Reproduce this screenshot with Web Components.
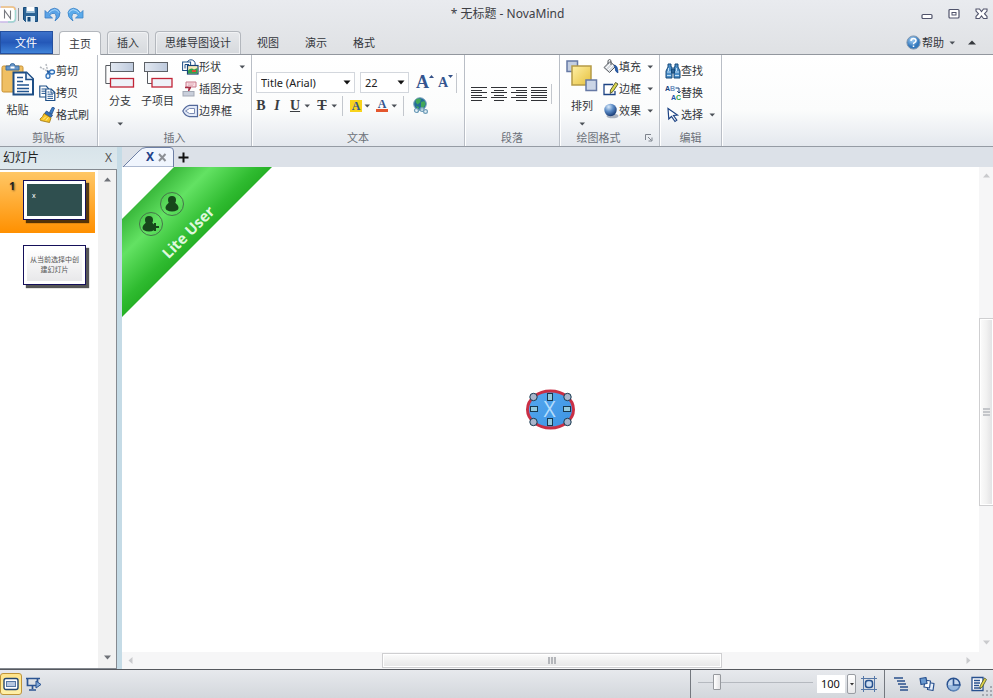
<!DOCTYPE html>
<html lang="zh-CN">
<head>
<meta charset="utf-8">
<title>无标题 - NovaMind</title>
<style>
  html, body { height: 100%; margin: 0; }
  body { font: 11px/16px "Noto Sans", "Noto Sans CJK SC", sans-serif; color: #33363b; overflow: hidden; }
</style>
</head>
<body>
<nm-app></nm-app>

<script>
/* Icon artwork: [width, height, markup] */
const ICONS = {
  logo: [17, 17, `<rect x="-2" y="1" width="17.500" height="15" rx="3" fill="#fff" stroke="#c9b8e8" stroke-width="1.400"/><path d="M1 1h11q3 0 3 3" fill="none" stroke="#f3c77d" stroke-width="1.400"/><path d="M15.500 4v8q0 4-4 4H8" fill="none" stroke="#9fd9cf" stroke-width="1.400"/><path d="M4.500 12.500v-8l6 8v-8" fill="none" stroke="#77797f" stroke-width="1.100"/>`],
  save: [15, 15, `<path d="M.5.5h14v14h-12l-2-2z" fill="#2c6496" stroke="#174a7a"/><rect x="3.500" y="0" width="8" height="6" fill="#fff"/><rect x="4" y="4" width="7" height="2" fill="#9fc3dd"/><rect x="3" y="9" width="9" height="6" fill="#dbe9f3"/><rect x="4.500" y="10" width="3" height="4.500" fill="#174a7a"/>`],
  undo: [17, 15, `<path d="M1 3.500v7.500h7.500L5.800 8.600Q7.500 5.500 10.500 6.500q3 2 .5 7.500 5.500-3.500 5-8.500Q15 1.500 10.500 1.200 6 1.500 3.500 6z" fill="#5aa2e6" stroke="#3a7cc4" stroke-width=".8"/><path d="M5 6Q8 2.500 11 2.700q3 .3 3.800 3" stroke="#a9d6fb" fill="none"/>`],
  redo: [17, 15, `<path d="M16 3.500v7.500H8.500l2.700-2.400Q9.500 5.500 6.500 6.500q-3 2-.5 7.500Q.5 10.500 1 5.500 2 1.500 6.500 1.200 11 1.500 13.500 6z" fill="#5aaaea" stroke="#3a84c8" stroke-width=".8"/><path d="M12 6Q9 2.500 6 2.700 3 3 2.200 5.700" stroke="#b3dcfc" fill="none"/>`],
  min: [12, 12, `<rect x="1" y="6.500" width="10" height="4" rx="1" fill="#fff" stroke="#50536b" stroke-width="1.200"/>`],
  max: [12, 12, `<rect x="1" y="1.500" width="10" height="8.500" rx="1" fill="#fff" stroke="#50536b" stroke-width="1.200"/><rect x="4" y="4.500" width="4" height="2.500" fill="#fff" stroke="#50536b"/>`],
  close: [13, 12, `<path d="M1 1h3.500l2 2.500 2-2.500H12v2L9.500 5.700 12 8.500v2H8.500l-2-2.500-2 2.500H1v-2l2.500-2.800L1 3z" fill="#fff" stroke="#50536b" stroke-width="1.100"/>`],
  help: [15, 15, `<defs><radialGradient id="g" cx=".4" cy=".3"><stop offset="0" stop-color="#a9d4f8"/><stop offset="1" stop-color="#3479bd"/></radialGradient></defs><circle cx="7.500" cy="7.500" r="6.600" fill="url(#g)" stroke="#8297af"/><path d="M5 6q0-2.500 2.500-2.500T10 5.800Q10 7 8.500 7.600 7.500 8 7.500 9.200M7.500 10.500v1.500" fill="none" stroke="#fff" stroke-width="1.500"/>`],
  caret: [7, 4, `<path d="M.5.5h5.500L3.250 3.500z" fill="#4b5057"/>`],
  caretup: [8, 5, `<path d="M0 4.500h8L4 .5z" fill="#35383d"/>`],
  drop: [8, 5, `<path d="M.5.5h7L4 4.500z" fill="#111"/>`],
  paste: [33, 33, `<rect x="1" y="3" width="21" height="26" rx="1.500" fill="#efbf63" stroke="#c68f33"/><path d="M5 3h4q0-2.500 2.500-2.500T14 3h4v4H5z" fill="#6695c8" stroke="#3d6ea3"/><rect x="9.500" y="3.500" width="4" height="2" fill="#fff"/><path d="M12.500 9.500h13l6.500 6.500v15.500H12.500z" fill="#fff" stroke="#1d4e86" stroke-width="2"/><path d="M25 9.500v7h7" fill="#e7f0fa" stroke="#1d4e86" stroke-width="1.600"/><path d="M16 14.500h6M16 18.500h6M16 22h12M16 25.500h12M16 28.500h12" stroke="#245690" stroke-width="1.700"/>`],
  cut: [17, 16, `<path d="M1 4l9 5M7 1l2 8" stroke="#b5b9bf" stroke-width="1.500" stroke-dasharray="2 1"/><path d="M8 8l4 1.500M9 9v2.500" stroke="#245a9d" stroke-width="1.600"/><ellipse cx="13" cy="9" rx="2.500" ry="2" fill="#e6f2ff" stroke="#2d6fb8" stroke-width="1.300"/><ellipse cx="9" cy="13" rx="2" ry="2.300" fill="#e6f2ff" stroke="#2d6fb8" stroke-width="1.300"/>`],
  copy: [17, 16, `<path d="M.8 1h6.500l2.500 3v8h-9z" fill="#fff" stroke="#1d4e86" stroke-width="1.200"/><path d="M2.500 4h4M2.500 6.200h5M2.500 8.400h5" stroke="#245690"/><path d="M6.800 4h5.500l3.500 3.500v8h-9z" fill="#fff" stroke="#1d4e86" stroke-width="1.200"/><path d="M12 4v4h4" fill="none" stroke="#1d4e86"/><path d="M8.500 7h2M8.500 9.200h5.500M8.500 11.300h5.500M8.500 13.400h5.500" stroke="#245690"/>`],
  brush: [17, 16, `<path d="M13.500 0l2 1-2.500 6-2.500-1.500z" fill="#3d7cc4" stroke="#1e4d8d" stroke-width=".8"/><path d="M7.500 4l6 4-1.500 2.500-6.500-4z" fill="#3570b8" stroke="#1d4680" stroke-width=".8"/><path d="M5 6.500l7 4.500-1.500 4.500-9-2-.5-1.500q3-2 4-5.500z" fill="#f7c325" stroke="#9b7410" stroke-width=".8"/><path d="M4 12.500l3-3M7 13.500l2.500-3" stroke="#fff09a"/>`],
  branch: [30, 29, `<defs><linearGradient id="g" x2="1"><stop stop-color="#e2e8f1"/><stop offset="1" stop-color="#bdc9dc"/></linearGradient></defs><path d="M6 4.500H.8v18H6" fill="none" stroke="#55595f"/><rect x="5.500" y="1.500" width="23" height="9" fill="url(#g)" stroke="#5d6167"/><rect x="5.500" y="17.500" width="23" height="8.500" fill="#eef1f8" stroke="#c22436" stroke-width="1.300"/>`],
  child: [30, 29, `<defs><linearGradient id="g" x2="1"><stop stop-color="#e2e8f1"/><stop offset="1" stop-color="#bdc9dc"/></linearGradient></defs><path d="M4.500 11v11.500H9" fill="none" stroke="#55595f"/><rect x="1.500" y="1.500" width="23" height="9" fill="url(#g)" stroke="#5d6167"/><rect x="9" y="17.500" width="20" height="8.500" fill="#eef1f8" stroke="#c22436" stroke-width="1.300"/>`],
  shape: [17, 16, `<circle cx="9" cy="5" r="4.200" fill="#fff" stroke="#1d4e86"/><rect x=".6" y="3" width="8" height="8.500" fill="#fff" stroke="#1d4e86"/><path d="M3 9.500V5.500h4" fill="none" stroke="#1d4e86"/><rect x="5.500" y="6.500" width="10.500" height="8.500" fill="#f8e9bb" stroke="#184376" stroke-width="1.200"/><path d="M6 14.500v-3q3-3.500 6-1l3.500-1.500v5.500z" fill="#35a04b"/><path d="M10 12h4" stroke="#df4b38" stroke-width="2"/>`],
  callout: [17, 16, `<path d="M4 1h10v5H8.500l-2 3.500V6H4z" fill="#f8dfe5" stroke="#c8788a"/><path d="M6 3h6M6 4.700h5" stroke="#d99aa6" stroke-width=".7"/><path d="M3 6.500h6M8.500 6.500l-2 3.500" stroke="#a52d43" stroke-width="1.500"/><rect x="1" y="10.500" width="11" height="4.500" fill="#c9cfdb" stroke="#a3a9b5"/>`],
  boundary: [17, 16, `<path d="M.8 8q2.500-5 6.700-5.700h8v11.400h-8Q3.300 13 .8 8z" fill="#e3eaf8" stroke="#53689a" stroke-width="1.200"/><path d="M3.500 8l4-2.500h5v5H7.500z" fill="#fff" stroke="#7d8db5"/>`],
  globe: [17, 17, `<circle cx="8" cy="7" r="6.300" fill="#236c98" stroke="#7ca5bd"/><path d="M4 2.500q3-2 5 0l-1 3-2.500 2L3.500 5zM9 5l3.500-1 1 3-2.500 5-2-1.500zM4 9l3 1-1 2.500z" fill="#41a85a"/><g fill="#dcebf5" fill-opacity=".65" stroke="#6f9db9" stroke-width="1.200"><circle cx="4.500" cy="13.500" r="2"/><circle cx="10" cy="12.500" r="2"/><circle cx="13.500" cy="14.500" r="1.900"/></g>`],
  left: [17, 14, `<path d="M0 .5h16M0 3.500h11M0 5.500h16M0 8.500h11M0 10.500h16M0 13.500h11" stroke="#303236"/>`],
  center: [17, 14, `<path d="M0 .5h16M3 3.500h10M0 5.500h16M3 8.500h10M0 10.500h16M3 13.500h10" stroke="#303236"/>`],
  right: [17, 14, `<path d="M0 .5h16M5 3.500h11M0 5.500h16M5 8.500h11M0 10.500h16M5 13.500h11" stroke="#303236"/>`],
  justify: [17, 14, `<path d="M0 .5h16M0 3.500h16M0 5.500h16M0 8.500h16M0 10.500h16M0 13.500h16" stroke="#303236"/>`],
  arrange: [32, 32, `<defs><linearGradient id="g" x2="1" y2="1"><stop stop-color="#fff0a6"/><stop offset="1" stop-color="#e6c03c"/></linearGradient></defs><rect x="1" y="1" width="10.500" height="10.500" fill="#c3cee1" stroke="#6679a5" stroke-width="1.500"/><rect x="6" y="6" width="19" height="19" fill="url(#g)" stroke="#b59b47" stroke-width="1.500"/><rect x="20" y="20" width="10.500" height="10.500" fill="#cbd5e6" stroke="#6679a5" stroke-width="1.500"/>`],
  fill: [16, 16, `<path d="M1 8.500l6-6 5.500 5-6 6z" fill="#d9dde2" stroke="#55595f"/><path d="M3 9l4.500-4.500M5 11l5-5" stroke="#fff"/><path d="M5 5V1.500q2-2 3 0V6" fill="none" stroke="#55595f"/><path d="M11 6q4 0 4 8-3-1-3-5.500z" fill="#245db2" stroke="#173f7f" stroke-width=".6"/>`],
  border: [16, 16, `<path d="M10 3.500H1v10h11V10" fill="#fff" stroke="#1d4384" stroke-width="1.300"/><path d="M12.500 1.500l2.500 1.500-5 7.500-2.800 2 .3-3.500z" fill="#dcd84e" stroke="#4d502f" stroke-width=".9"/>`],
  effect: [16, 16, `<defs><radialGradient id="g" cx=".35" cy=".25" r=".75"><stop stop-color="#d9eafa"/><stop offset=".5" stop-color="#5a8ac5"/><stop offset="1" stop-color="#1c3f79"/></radialGradient></defs><ellipse cx="9.500" cy="13" rx="6" ry="2.300" fill="#a9b1be"/><circle cx="7.500" cy="7" r="6.200" fill="url(#g)"/>`],
  find: [16, 16, `<g fill="#4d8fc8" stroke="#174a7a"><path d="M3 1h3v3h1v11H1V8l2-4zM10 1h3v3l2 4v7H9V4h1z"/><path d="M6.500 6h3v4h-3z" fill="#2c6496"/></g><path d="M2 9h4M10 9h4M2 12.500h4M10 12.500h4M3.500 5v3M11.500 5v3" stroke="#c2e0f6"/>`],
  replace: [16, 16, `<g font-family="Liberation Sans, sans-serif" font-weight="bold" font-size="7"><text x="0" y="6" fill="#17407c">A</text><text x="5" y="6" fill="#6f92bd">B</text><text x="6" y="15" fill="#1b51ab">A</text><text x="11" y="15" fill="#27a048">C</text></g><path d="M10.500 3H14v5M12.300 6.200L14 8l1.700-1.800" fill="none" stroke="#17407c"/>`],
  select: [16, 16, `<path d="M3 1.500l.8 10.500 2.700-2.500 3.500 5 1.800-1.300-3.300-4.700 4-.5z" fill="#fff" stroke="#1d4384" stroke-width="1.200"/>`],
  launcher: [8, 8, `<path d="M.5 6V.5H6" fill="none" stroke="#7d838d"/><path d="M3 3l3.500 3.500M7 3.500V7H3.500" fill="none" stroke="#7d838d"/>`],
  tri: [7, 5, `<path d="M0 4.500h7L3.500.5z" fill="currentColor"/>`],
  normal: [16, 16, `<rect x="1" y="2.500" width="14" height="11" rx="2" fill="#fff" stroke="#23466f" stroke-width="1.400"/><rect x="3.500" y="5.500" width="9" height="5" fill="#b6c7df" stroke="#5577a3"/>`],
  present: [17, 16, `<path d="M1 2.500h14M2.500 3v6.500h10V3M7.500 10v3M4 14h7" fill="none" stroke="#2b5492" stroke-width="1.700"/><path d="M11 5l5 3.500-5 3.500z" fill="#83a9d8" stroke="#2b5492"/>`],
  fit: [16, 16, `<path d="M2.500 0v16M13.500 0v16M0 2.500h16M0 13.500h16" stroke="#5678a8"/><rect x="4.500" y="4.500" width="7" height="7" rx="2.500" fill="#cfdff2" stroke="#27528e" stroke-width="1.500"/>`],
  outline: [15, 16, `<path d="M0 2h9M3 5h8M4 8h8M6 11h8M6 14h8" stroke="#2a508c" stroke-width="1.700"/>`],
  stack: [17, 16, `<g stroke="#28518f" stroke-width="1.200" stroke-linejoin="round"><path d="M9.500 6.500l5.500 1-1 7-5.500-1z" fill="#e8f0fb"/><path d="M6 4l5.500 1-1 7-5.500-1z" fill="#fff"/><path d="M1 2.500l6-1 1 6-6 1z" fill="#6b9ad0"/></g>`],
  pie: [15, 15, `<circle cx="7.500" cy="7.500" r="6.300" fill="#c6d8ee" stroke="#28518f" stroke-width="1.500"/><path d="M1.500 8h13q-.5 6-7 6.500-5.500-1-6-6.500z" fill="#7da6d5" opacity=".6"/><path d="M7.500 1v7h7" fill="none" stroke="#28518f" stroke-width="1.600"/>`],
  notes: [16, 16, `<path d="M1 1.500h11v13H1z" fill="#fff" stroke="#28518f" stroke-width="1.300"/><path d="M3 4.500h6M3 7h6M3 9.500h5M3 12h7" stroke="#28518f" stroke-width="1.300"/><path d="M13.500 2l2 1.500-4.500 8-2 1 0-2.500z" fill="#e1d44b" stroke="#46522f" stroke-width=".8"/>`],
  grip: [11, 11, `<path d="M8 0h2v2H8zM4 4h2v2H4zM8 4h2v2H8zM0 8h2v2H0zM4 8h2v2H4zM8 8h2v2H8z" fill="#a4a9b1"/>`]
};

const RESET = `
  * { box-sizing: border-box; }
  button { font: inherit; color: inherit; background: none; border: 0; padding: 0; margin: 0; }
  button nm-icon { pointer-events: none; }`;

function define(name, css, html, setup) {
  const template = document.createElement('template');
  template.innerHTML = `<style>${RESET}${css}</style>${html}`;
  customElements.define(name, class extends HTMLElement {
    constructor() {
      super();
      this.attachShadow({ mode: 'open' }).append(template.content.cloneNode(true));
    }
    connectedCallback() { if (setup) setup(this, this.shadowRoot); }
  });
}

/* Puts the artwork named by the host's icon attribute first in its button. */
function addIcon(el, root) {
  if (root.querySelector('.art')) return;
  const icon = document.createElement('nm-icon');
  icon.className = 'art';
  icon.setAttribute('name', el.getAttribute('icon'));
  root.querySelector('button').prepend(icon);
}

define('nm-icon', `:host { display: block; flex: none; } span, svg { display: block; }`, `<span></span>`, (el, root) => {
  const [w, h, art] = ICONS[el.getAttribute('name')];
  root.querySelector('span').innerHTML = `<svg width="${w}" height="${h}" viewBox="0 0 ${w} ${h}" aria-hidden="true">${art}</svg>`;
});

define('nm-title-bar', `
  :host { display: flex; align-items: center; height: 28px; padding-right: 5px; }
  .quick { display: flex; align-items: center; gap: 6px; }
  .quick i { width: 1px; height: 13px; background: #8e9299; margin: 0 -2px 0 -5px; }
  h1 { flex: 1; margin: 0; padding-left: 10px; text-align: center; font-size: 12px; font-weight: 400; line-height: 28px; color: #3d4045; }
  .window { display: flex; gap: 15px; }`,
  `<div class="quick"><nm-icon name="logo"></nm-icon><i></i>
     <button aria-label="保存"><nm-icon name="save"></nm-icon></button>
     <button aria-label="撤销"><nm-icon name="undo"></nm-icon></button>
     <button aria-label="重做"><nm-icon name="redo"></nm-icon></button></div>
   <h1>* 无标题 - NovaMind</h1>
   <div class="window">
     <button aria-label="最小化"><nm-icon name="min"></nm-icon></button>
     <button aria-label="最大化"><nm-icon name="max"></nm-icon></button>
     <button aria-label="关闭"><nm-icon name="close"></nm-icon></button></div>`);

define('nm-tab', `
  :host { display: block; }
  button { display: block; height: 100%; padding: 0 10px; border: 1px solid transparent; border-width: 1px 0 0; line-height: 22px; }
  :host([kind=file]) button { padding: 0 16px 0 15px; color: #fff; background: linear-gradient(#3f74cc, #2458b8 50%, #4388dc); box-shadow: inset 0 0 0 1px #2450a0; border: 0; }
  :host([kind=boxed]) button { border: 1px solid #b3b7bd; border-bottom: 0; border-radius: 4px 4px 0 0; padding: 0 9px; background: linear-gradient(#e6e8eb, #d6d9dd); box-shadow: inset 0 0 0 1px #f1f2f4; }
  :host([kind=active]) { position: relative; margin-bottom: -1px; }
  :host([kind=active]) button { border: 1px solid #b3b7bd; border-bottom: 0; border-radius: 4px 4px 0 0; padding: 0 9px; background: #fff; }`,
  `<button role="tab"><slot></slot></button>`);

define('nm-tab-bar', `
  :host { display: flex; height: 27px; padding-top: 3px; border-bottom: 1px solid #92979e; }
  nav { display: flex; gap: 6px; flex: 1; }
  .help { display: flex; align-items: center; gap: 12px; padding-right: 17px; }
  .help button { display: flex; align-items: center; gap: 1px; }
  .help nm-icon[name=caret] { margin-left: 4px; }`,
  `<nav role="tablist"><nm-tab kind="file">文件</nm-tab><nm-tab kind="active">主页</nm-tab><nm-tab kind="boxed">插入</nm-tab><nm-tab kind="boxed">思维导图设计</nm-tab><nm-tab>视图</nm-tab><nm-tab>演示</nm-tab><nm-tab>格式</nm-tab></nav>
   <div class="help"><button><nm-icon name="help"></nm-icon>帮助<nm-icon name="caret"></nm-icon></button><button aria-label="折叠功能区"><nm-icon name="caretup"></nm-icon></button></div>`);

define('nm-group', `
  :host { display: flex; flex-direction: column; border-right: 1px solid #b9bec6; box-shadow: 1px 0 #fff; }
  .body { flex: 1; display: flex; min-height: 0; }
  footer { display: flex; align-items: center; height: 16px; color: #6b7078; text-align: center; }
  footer span { flex: 1; }
  footer button { padding-right: 6px; padding-left: 8px; display: none; }
  :host([launcher]) footer button { display: block; }`,
  `<div class="body"><slot></slot></div><footer><span></span><button aria-label="更多选项"><nm-icon name="launcher"></nm-icon></button></footer>`,
  (el, root) => { root.querySelector('span').textContent = el.getAttribute('label'); });

define('nm-big-button', `
  :host { display: block; }
  button { height: 100%; display: flex; flex-direction: column; align-items: center; justify-content: flex-start; padding-bottom: 4px; }
  span { line-height: 18px; margin-top: var(--label-gap, 2px); }
  nm-icon[name=caret] { margin-top: auto; display: none; }
  :host([menu]) nm-icon[name=caret] { display: block; }`,
  `<button><span><slot></slot></span><nm-icon name="caret"></nm-icon></button>`, addIcon);

define('nm-small-button', `
  :host { display: block; }
  button { width: 100%; height: 22px; display: flex; align-items: center; }
  i { flex: 1; }
  nm-icon[name=caret] { margin-left: 6px; display: none; }
  :host([menu]) nm-icon[name=caret] { display: block; }`,
  `<button><slot></slot><i></i><nm-icon name="caret"></nm-icon></button>`, addIcon);

define('nm-combo', `
  :host { display: grid; height: 21px; border: 1px solid #d3d7dd; background: #fff; }
  select, nm-icon { grid-area: 1 / 1; }
  select { appearance: none; font: inherit; color: #222; border: 0; background: none; padding: 0 16px 0 4px; min-width: 0; width: 100%; }
  nm-icon { place-self: center end; margin-right: 3px; pointer-events: none; }`,
  `<select><option></option></select><nm-icon name="drop"></nm-icon>`,
  (el, root) => {
    root.querySelector('option').textContent = el.getAttribute('value');
    root.querySelector('select').setAttribute('aria-label', el.getAttribute('label'));
  });

define('nm-ribbon', `
  :host { display: flex; height: 92px; background: linear-gradient(#fff, #fbfcfc 60%, #e4e8ee); border-bottom: 1px solid #959ba4; }
  .col { display: flex; flex-direction: column; }
  .low { padding: 5px 8px 0 0; }
  .high { padding: 1px 5px 0 0; }
  .wide { min-width: 69px; }
  .clip { display: flex; padding: 8px 5px 0 1px; --label-gap: 5px; }
  .insert { display: flex; gap: 6px; padding: 6px 8px 0 7px; }
  .text { padding: 17px 7px 0 4px; gap: 2px; }
  .row { display: flex; align-items: center; height: 21px; }
  .row button { display: flex; align-items: center; justify-content: center; }
  .row .glyph { font: bold 14px/18px "Liberation Serif", serif; color: #3a3d42; height: 21px; }
  .row .italic { font-style: italic; }
  .row .under { text-decoration: underline; }
  .row .strike { text-decoration: line-through; }
  .row .font-size { font: bold 18px/21px "Liberation Serif", serif; color: #34558f; height: 21px; }
  .row .font-size.small { font-size: 14px; }
  .font-size svg { align-self: flex-start; margin-top: 2px; }
  .row .mark { width: 12px; height: 12px; background: #f8d31c; font: bold 12px/12px "Liberation Serif", serif; color: #34558f; }
  .row .mark.red { background: none; height: 13px; border-bottom: 3px solid #e4572e; line-height: 10px; }
  .sep { width: 1px; height: 20px; background: #c3c7cd; }
  .align { display: flex; gap: 3px; align-items: center; padding: 2px 7px 0 6px; }
  .arrange { display: flex; padding: 5px 5px 0 6px; --label-gap: 5px; }
  .edit { padding: 5px 5px 0 5px; }`,
  `<nm-group label="剪贴板">
     <div class="clip"><nm-big-button icon="paste">粘贴</nm-big-button></div>
     <div class="col low"><nm-small-button icon="cut">剪切</nm-small-button><nm-small-button icon="copy">拷贝</nm-small-button><nm-small-button icon="brush">格式刷</nm-small-button></div>
   </nm-group>
   <nm-group label="插入">
     <div class="insert"><nm-big-button icon="branch" menu>分支</nm-big-button><nm-big-button icon="child">子项目</nm-big-button></div>
     <div class="col high wide"><nm-small-button icon="shape" menu>形状</nm-small-button><nm-small-button icon="callout">插图分支</nm-small-button><nm-small-button icon="boundary">边界框</nm-small-button></div>
   </nm-group>
   <nm-group label="文本"><div class="col text">
     <div class="row">
       <nm-combo label="字体" value="Title (Arial)" style="width:99px;margin-right:5px"></nm-combo>
       <nm-combo label="字号" value="22" style="width:49px;margin-right:7px"></nm-combo>
       <button class="font-size" aria-label="增大字号">A<svg width="5" height="6"><path d="M0 4h5L2.500 1z" fill="#345187"/></svg></button>
       <button class="font-size small" aria-label="减小字号" style="margin-left:4px">A<svg width="5" height="6"><path d="M0 1h5L2.500 4z" fill="#345187"/></svg></button>
       <i class="sep" style="margin-left:auto"></i>
     </div>
     <div class="row">
       <button class="glyph" style="width:10px">B</button>
       <button class="glyph italic" style="width:10px;margin-left:6px">I</button>
       <button class="glyph under" style="width:12px;margin-left:7px">U</button><nm-icon name="caret" style="margin-left:3px"></nm-icon>
       <button class="glyph strike" style="width:10px;margin-left:6px">T</button><nm-icon name="caret" style="margin-left:4px"></nm-icon>
       <i class="sep" style="margin-left:4px"></i>
       <button class="mark" style="margin-left:7px">A</button><nm-icon name="caret" style="margin-left:2px"></nm-icon>
       <button class="mark red" style="margin-left:5px">A</button><nm-icon name="caret" style="margin-left:3px"></nm-icon>
       <i class="sep" style="margin-left:5px"></i>
       <button aria-label="超链接" style="margin-left:8px;margin-right:28px"><nm-icon name="globe"></nm-icon></button>
     </div></div>
   </nm-group>
   <nm-group label="段落"><div class="align">
     <button aria-label="左对齐"><nm-icon name="left"></nm-icon></button><button aria-label="居中"><nm-icon name="center"></nm-icon></button><button aria-label="右对齐"><nm-icon name="right"></nm-icon></button><button aria-label="两端对齐"><nm-icon name="justify"></nm-icon></button><i class="sep"></i></div>
   </nm-group>
   <nm-group label="绘图格式" launcher>
     <div class="arrange"><nm-big-button icon="arrange" menu>排列</nm-big-button></div>
     <div class="col high"><nm-small-button icon="fill" menu>填充</nm-small-button><nm-small-button icon="border" menu>边框</nm-small-button><nm-small-button icon="effect" menu>效果</nm-small-button></div>
   </nm-group>
   <nm-group label="编辑">
     <div class="col edit"><nm-small-button icon="find">查找</nm-small-button><nm-small-button icon="replace">替换</nm-small-button><nm-small-button icon="select" menu>选择</nm-small-button></div>
   </nm-group>`);

define('nm-slides', `
  :host { display: flex; flex-direction: column; width: 117px; flex: none; background: #fff; }
  header { display: flex; align-items: center; justify-content: space-between; height: 22px; padding: 0 5px 0 3px; background: linear-gradient(#d8e4ea, #dfe9ee); font-size: 12px; color: #222; }
  header button { color: #555; }
  .area { flex: 1; display: flex; min-height: 0; border: 1px solid #858a91; border-width: 1px 1px 1px 0; }
  .list { flex: 1; padding-top: 2px; }
  .slide { display: flex; align-items: flex-start; width: 95px; height: 61px; padding: 8px 0 0 9px; }
  .slide + .slide { margin-top: 4px; }
  .slide.on { background: linear-gradient(#ffc766, #ff9000); }
  b { width: 14px; font-size: 11px; line-height: 11px; color: #222; text-shadow: 1px 1px 2px #0008; }
  .thumb { width: 63px; height: 40px; padding: 3px; border: 1px solid #15105a; background: #fff; box-shadow: 3px 3px 1px #000a; }
  .thumb div { height: 100%; display: grid; place-items: center; text-align: center; font-size: 7px; line-height: 10px; color: #555; background: linear-gradient(#fff, #e8e8ea); }
  .on .thumb div { background: #2f4f4f; color: #fff; place-items: start; padding: 7px 0 0 5px; }
  .scroll { width: 18px; background: #f2f2f2; display: flex; flex-direction: column; justify-content: space-between; align-items: center; padding: 7px 0 8px; color: #6f7278; }
  .down { transform: rotate(180deg); }`,
  `<header><span>幻灯片</span><button aria-label="关闭面板">X</button></header>
   <div class="area"><div class="list">
     <div class="slide on"><b>1</b><div class="thumb"><div>x</div></div></div>
     <div class="slide"><b></b><div class="thumb"><div>从当前选择中创<br>建幻灯片</div></div></div>
   </div><div class="scroll"><nm-icon name="tri"></nm-icon><nm-icon name="tri" class="down"></nm-icon></div></div>`);

define('nm-scrollbar', `
  :host { display: flex; align-items: center; background: #f6f6f7; color: #c9cacd; height: 17px; padding: 0 7px 0 5px; gap: 8px; }
  .track { flex: 1; display: flex; align-self: stretch; }
  .before { flex: var(--before); } .after { flex: var(--after); }
  .thumb { flex: var(--size); display: grid; place-items: center; border: 1px solid #cfcfd1; margin: 1px 0; background: linear-gradient(#fcfcfc, #f1f1f1 50%, #e6e6e7); box-shadow: inset 0 0 0 1px #fff; }
  .thumb i { width: 8px; height: 7px; background: repeating-linear-gradient(90deg, #b4b6ba 0 2px, #eee 2px 3px); }
  .start { transform: rotate(-90deg); } .end { transform: rotate(90deg); }
  :host([vertical]) { flex-direction: column; height: auto; width: 14px; padding: 6px 0 7px; }
  :host([vertical]) .track { flex-direction: column; }
  :host([vertical]) .thumb { margin: 0 -1px 0 0; background: linear-gradient(90deg, #fcfcfc, #f1f1f1 50%, #e0e0e2); }
  :host([vertical]) .thumb i { width: 7px; height: 8px; background: repeating-linear-gradient(#c4c6ca 0 2px, #eee 2px 3px); }
  :host([vertical]) .start { transform: none; } :host([vertical]) .end { transform: rotate(180deg); }`,
  `<nm-icon class="start" name="tri"></nm-icon><div class="track"><div class="before"></div><div class="thumb"><i></i></div><div class="after"></div></div><nm-icon class="end" name="tri"></nm-icon>`);

define('nm-license-ribbon', `
  :host { position: absolute; top: 0; left: 0; } svg { display: block; }`,
  `<svg width="152" height="152" viewBox="0 0 152 152">
     <defs><linearGradient id="green" gradientUnits="userSpaceOnUse" x1="26" y1="26" x2="75" y2="75"><stop stop-color="#39b83b"/><stop offset=".38" stop-color="#63e263"/><stop offset=".85" stop-color="#2fbb30"/><stop offset="1" stop-color="#26b126"/></linearGradient></defs>
     <path d="M0 52L52 0h98L0 150z" fill="url(#green)"/>
     <g fill="none" stroke="#47744b"><circle cx="50" cy="37" r="11.500"/><circle cx="29" cy="57" r="11.500"/></g>
     <g fill="#17471b"><circle cx="50" cy="33" r="4"/><path d="M47.500 35h5l3 3q2 3 0 5-5.500 3-11 0-2-2 0-5z"/><circle cx="27" cy="53" r="4"/><path d="M24.500 55h5l3 3q2 3 0 5-5.500 3-11 0-2-2 0-5z"/><path d="M32 56h2v3h3v2h-3v3h-2v-3h-3v-2h3z"/></g>
     <text transform="translate(70 69) rotate(-45)" text-anchor="middle" font-family="Open Sans, sans-serif" font-weight="700" font-size="15" fill="#dff8dc">Lite User</text>
   </svg>`);

define('nm-topic', `:host { display: block; } svg { display: block; }`,
  `<svg width="52" height="44" viewBox="0 0 52 44">
     <defs><linearGradient id="blue" x2="1" y2="1"><stop stop-color="#55a8f0"/><stop offset="1" stop-color="#3c93e2"/></linearGradient></defs>
     <ellipse cx="25.500" cy="21.500" rx="23" ry="18.500" fill="url(#blue)" stroke="#c92f45" stroke-width="3"/>
     <text x="24.500" y="29" text-anchor="middle" font-family="Open Sans, sans-serif" font-size="21" fill="#b4dcfb">X</text>
     <g stroke="#17384e" fill="#a9b6cc"><circle cx="8.500" cy="9" r="3.700"/><circle cx="42.500" cy="9" r="3.700"/><circle cx="8.500" cy="34" r="3.700"/><circle cx="42.500" cy="34" r="3.700"/></g>
     <g stroke="#17384e" fill="#93c9dd"><rect x="22.500" y="5.500" width="5" height="7"/><rect x="22.500" y="30.500" width="5" height="7"/><rect x="5.500" y="18.500" width="7" height="5"/><rect x="38.500" y="18.500" width="7" height="5"/></g>
   </svg>`);

define('nm-document', `
  :host { flex: 1; min-width: 0; display: flex; flex-direction: column; background: #fff; }
  .strip { display: flex; height: 20px; background: #dce1e8; align-items: center; }
  .doc { position: relative; display: flex; align-items: center; gap: 4px; width: 53px; height: 20px; padding: 0 7px 0 24px; }
  .doc svg.back { position: absolute; inset: 0; z-index: 0; }
  .doc button { position: relative; font-size: 12px; font-weight: 700; color: #23418a; line-height: 20px; }
  .add { padding: 0 3px; }
  .add svg, .x svg { display: block; }
  .stage { flex: 1; min-height: 0; display: grid; grid-template: 1fr auto / 1fr auto; }
  .canvas { position: relative; display: grid; place-items: center; overflow: hidden; }
  .corner { background: #f6f6f7; }`,
  `<div class="strip"><div class="doc">
     <svg class="back" width="53" height="20" viewBox="0 0 53 20"><path d="M1 20L17 4Q20 .5 24 .5H48Q51.500 .5 51.500 4V20z" fill="#f0f5fd" stroke="#6d7fa5"/></svg>
     <button>X</button><button class="x" aria-label="关闭标签"><svg width="9" height="9"><path d="M1 1l6.500 7M7.500 1L1 8" stroke="#8c8f96" stroke-width="2"/></svg></button></div>
     <button class="add" aria-label="新建标签"><svg width="11" height="11"><path d="M5.500.5v10M.5 5.500h10" stroke="#111" stroke-width="2"/></svg></button></div>
   <div class="stage"><div class="canvas"><nm-license-ribbon></nm-license-ribbon><nm-topic></nm-topic></div>
     <nm-scrollbar vertical style="--before:134;--size:189;--after:128"></nm-scrollbar>
     <nm-scrollbar style="--before:243;--size:342;--after:238"></nm-scrollbar><div class="corner"></div></div>`);

define('nm-status-bar', `
  :host { display: flex; align-items: center; height: 29px; border-top: 1px solid #55585e; background: linear-gradient(#e7e9ed, #d3d7dc); position: relative; }
  .view { width: 22px; height: 22px; display: grid; place-items: center; }
  .view.on { background: linear-gradient(#ffe48a, #fff0a8); border: 1px solid #c09538; border-radius: 3px; }
  .space { flex: 1; }
  .sep { width: 1px; height: 28px; background: #74787f; }
  input[type=range] { appearance: none; width: 115px; height: 18px; margin: 0 4px 4px 7px; background: linear-gradient(#b5b9bf, #b5b9bf) center / 100% 1px no-repeat; }
  input[type=range]::-webkit-slider-thumb { appearance: none; width: 8px; height: 16px; border: 1px solid #96999e; border-radius: 1px; background: linear-gradient(90deg, #fff, #e4e4e6); }
  .zoom { width: 28px; height: 18px; border: 0; padding: 0 0 0 4px; font: inherit; line-height: 18px; color: #111; background: #fff; }
  .step { width: 9px; height: 20px; margin: 0 5px 0 2px; border: 1px solid #999da3; border-radius: 2px; background: linear-gradient(#fff, #e8e8ea); display: grid; place-items: center; }
  .modes { display: flex; align-items: center; gap: 10px; padding: 0 6px 0 9px; }
  .grip { position: absolute; right: 0; bottom: 1px; }`,
  `<button class="view on" aria-label="普通视图"><nm-icon name="normal"></nm-icon></button><button class="view" aria-label="演示视图"><nm-icon name="present"></nm-icon></button>
   <div class="space"></div><i class="sep"></i>
   <input type="range" min="0" max="100" value="14" aria-label="缩放">
   <input class="zoom" value="100" aria-label="缩放百分比"><button class="step" aria-label="缩放选项"><svg width="4" height="3"><path d="M0 0h4L2 2.500z" fill="#333"/></svg></button>
   <button aria-label="适合窗口"><nm-icon name="fit"></nm-icon></button><i class="sep" style="margin-left:7px"></i>
   <div class="modes"><button aria-label="大纲"><nm-icon name="outline"></nm-icon></button><button aria-label="幻灯片"><nm-icon name="stack"></nm-icon></button><button aria-label="图表"><nm-icon name="pie"></nm-icon></button><button aria-label="备注"><nm-icon name="notes"></nm-icon></button></div>
   <nm-icon class="grip" name="grip"></nm-icon>`);

define('nm-app', `
  :host { display: flex; flex-direction: column; height: 100vh; background: linear-gradient(#e9ebef, #dfe1e4 54px); }
  main { flex: 1; min-height: 0; display: flex; }
  .splitter { width: 5px; background: #c5dbe6; }`,
  `<nm-title-bar></nm-title-bar><nm-tab-bar></nm-tab-bar><nm-ribbon></nm-ribbon>
   <main><nm-slides></nm-slides><div class="splitter"></div><nm-document></nm-document></main>
   <nm-status-bar></nm-status-bar>`);
</script>
</body>
</html>
